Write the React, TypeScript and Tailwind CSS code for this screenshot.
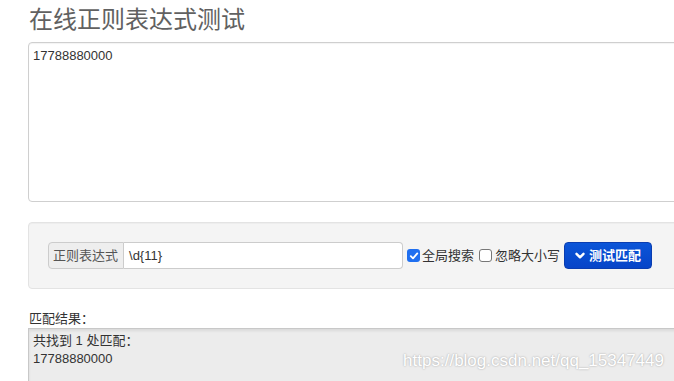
import React from "react";

const font = "'Liberation Sans', 'Noto Sans CJK SC', Arial, sans-serif";

export default function App() {
  return (
    <div
      className="relative w-[674px] h-[381px] overflow-hidden bg-white text-[#333]"
      style={{ fontFamily: font }}
    >
      <div className="w-[720px] pl-[28px]">
        <h1 className="pt-[7px] pb-[9px] pl-[1px] text-[24px] leading-[26px] font-normal text-[#616161]">
          在线正则表达式测试
        </h1>
        <div className="h-[160px] rounded-[4px] border border-[#cfcfcf] bg-white px-[4px] py-[4px] text-[13px] leading-[18px] shadow-[inset_0_1px_1px_rgba(0,0,0,0.05)]">
          17788880000
        </div>

        <div className="mt-[20px] rounded-[4px] border border-[#e3e3e3] bg-[#f4f4f4] p-[19px] shadow-[inset_0_1px_1px_rgba(0,0,0,0.03)]">
          <div className="flex items-center h-[27px]">
            <div className="flex h-[27px] shrink-0 items-center whitespace-nowrap rounded-l-[4px] border border-[#ccc] bg-[#eee] pl-[4px] pr-[5px] text-[13px] text-[#555]">
              正则表达式
            </div>
            <div className="flex h-[27px] w-[279px] shrink-0 items-center rounded-r-[4px] border border-l-0 border-[#ccc] bg-white pl-[5px] text-[13px] text-[#333]">
              \d{"{"}11{"}"}
            </div>
            <span className="ml-[4px] flex h-[13px] w-[13px] shrink-0 items-center justify-center rounded-[3px] bg-[#1f6ff0]">
              <svg width="10" height="10" viewBox="0 0 10 10">
                <path d="M1.8 5.2 L4 7.4 L8.3 2.4" fill="none" stroke="white" strokeWidth="1.8" strokeLinecap="round" strokeLinejoin="round" />
              </svg>
            </span>
            <span className="ml-[2px] whitespace-nowrap text-[13px] text-[#333]">全局搜索</span>
            <span className="ml-[5px] h-[13px] w-[13px] shrink-0 rounded-[3px] border border-[#777] bg-white" />
            <span className="ml-[3px] whitespace-nowrap text-[13px] text-[#333]">忽略大小写</span>
            <button className="ml-[4px] flex h-[27px] w-[88px] shrink-0 items-center justify-center gap-[4px] rounded-[4px] border border-[#0a3db0] bg-gradient-to-b from-[#0b55d8] to-[#0744c8] text-[13px] font-bold text-white">
              <svg width="10" height="8" viewBox="0 0 10 8">
                <path d="M1.5 1.8 L5 5.3 L8.5 1.8" fill="none" stroke="white" strokeWidth="2.4" strokeLinecap="round" strokeLinejoin="round" />
              </svg>
              测试匹配
            </button>
          </div>
        </div>

        <div className="mt-[21px] pl-[1px] text-[13px] leading-[18px] text-[#333]">匹配结果：</div>
        <div className="h-[60px] border border-[#c8c8c8] bg-[#ececec] px-[4px] pt-[3px] text-[13px] leading-[18px] text-[#333] shadow-[inset_0_2px_3px_rgba(0,0,0,0.08)]">
          <div>共找到 1 处匹配：</div>
          <div>17788880000</div>
        </div>
      </div>

      <div
        className="absolute right-[10px] top-[350px] text-[17px] leading-[22px] text-white"
        style={{ textShadow: "0 0 2px rgba(0,0,0,0.35)" }}
      >
        https://blog.csdn.net/qq_15347449
      </div>
    </div>
  );
}
